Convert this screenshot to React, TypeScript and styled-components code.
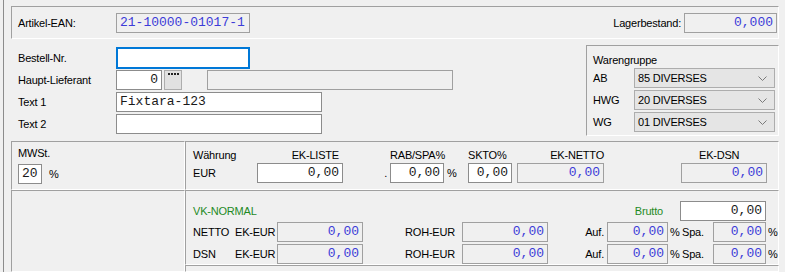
import styled, { createGlobalStyle } from "styled-components";

const BLUE = "#3c3cd8";
const GREEN = "#1f8a1f";

const GlobalStyle = createGlobalStyle`
  body {
    margin: 0;
    background: #f0f0f0;
    font-family: "Liberation Sans", Arial, sans-serif;
    font-size: 11px;
    letter-spacing: -0.2px;
    color: #000;
  }
`;

const Window = styled.div`
  box-sizing: border-box;
  width: 782px;
  height: 272px;
  margin-left: 3px;
  padding: 6px 0 0 7px;
  border-left: 1px solid #8c8c8c;
  overflow: hidden;
`;

// sunken frame as the old win32 group boxes draw it
const Etched = styled.div`
  box-sizing: border-box;
  border-top: 1px solid #a0a0a0;
  border-left: 1px solid #a0a0a0;
  border-bottom: 1px solid #fff;
  border-right: 1px solid #fff;
`;

const HeaderPanel = styled(Etched)`
  width: 768px;
  height: 33px;
  display: flex;
  align-items: center;
  padding: 0 1px 0 6px;
`;

const Label = styled.span<{ $w?: number; $align?: "left" | "right"; $pl?: number; $pr?: number; $color?: string; $auto?: boolean }>`
  box-sizing: border-box;
  flex: none;
  display: inline-block;
  width: ${(p) => (p.$w ? `${p.$w}px` : "auto")};
  margin-left: ${(p) => (p.$auto ? "auto" : "0")};
  padding-left: ${(p) => p.$pl ?? 0}px;
  padding-right: ${(p) => p.$pr ?? 0}px;
  text-align: ${(p) => p.$align ?? "left"};
  color: ${(p) => p.$color ?? "#000"};
  white-space: nowrap;
`;

const Field = styled.div<{ $w: number; $h?: number; $ro?: boolean; $blue?: boolean; $left?: boolean; $focus?: boolean; $ml?: number }>`
  box-sizing: border-box;
  flex: none;
  width: ${(p) => p.$w}px;
  height: ${(p) => p.$h ?? 20}px;
  margin-left: ${(p) => p.$ml ?? 0}px;
  border: ${(p) => (p.$focus ? "2px solid #0078d7" : `1px solid ${p.$ro ? "#a0a0a0" : "#8c8c8c"}`)};
  background: ${(p) => (p.$ro ? "#f0f0f0" : "#fff")};
  color: ${(p) => (p.$blue ? BLUE : "#1a1a1a")};
  font-family: "Liberation Mono", "Courier New", monospace;
  font-size: 13px;
  letter-spacing: 0;
  line-height: 18px;
  padding: 0 3px 0 3px;
  text-align: ${(p) => (p.$left ? "left" : "right")};
  white-space: nowrap;
  overflow: hidden;
`;

const MiddleSection = styled.div`
  box-sizing: border-box;
  width: 768px;
  height: 102px;
  padding-top: 6px;
  display: flex;
  justify-content: space-between;
  align-items: flex-start;
`;

const Form = styled.div`
  margin: 2px 0 0 7px;
  display: flex;
  flex-direction: column;
`;

const FormRow = styled.div`
  height: 22px;
  display: flex;
  align-items: center;
`;

const DotsButton = styled.div`
  box-sizing: border-box;
  flex: none;
  width: 18px;
  height: 20px;
  margin-left: 2px;
  padding-top: 2px;
  background: #e1e1e1;
  border: 1px solid #adadad;
  display: flex;
  justify-content: center;
  align-items: flex-start;
`;

const GroupBox = styled(Etched)`
  width: 193px;
  height: 91px;
  padding: 8px 3px 0 6px;
`;

const GroupTitle = styled.div`
  line-height: 13px;
`;

const ComboRow = styled.div`
  height: 22px;
  display: flex;
  align-items: center;
`;

const Combo = styled.div`
  box-sizing: border-box;
  width: 141px;
  height: 20px;
  border: 1px solid #adadad;
  background: #e5e5e5;
  display: flex;
  align-items: center;
  justify-content: space-between;
  padding: 0 7px 0 3px;
`;

const BottomGrid = styled.div`
  width: 768px;
  height: 131px;
  display: grid;
  grid-template-columns: 174px 594px;
  grid-template-rows: 49px 75px 1fr;
`;

const MwstCell = styled(Etched)`
  padding: 5px 0 0 6px;
`;

const EmptyCell = styled(Etched)`
  grid-row: 2 / 4;
`;

const PurchaseCell = styled(Etched)`
  padding: 7px 0 0 7px;
  display: flex;
`;

const VkCell = styled(Etched)`
  padding: 10px 12px 0 7px;
`;

const InlineRow = styled.div<{ $mb?: number }>`
  height: 20px;
  line-height: 20px;
  margin-bottom: ${(p) => p.$mb ?? 0}px;
  display: flex;
  align-items: center;
`;

const Col = styled.div<{ $w: number; $ml?: number }>`
  flex: none;
  width: ${(p) => p.$w}px;
  margin-left: ${(p) => p.$ml ?? 0}px;
  display: flex;
  flex-direction: column;
`;

const ColHead = styled.div<{ $align?: "left" | "right"; $pl?: number; $pr?: number }>`
  height: 14px;
  line-height: 13px;
  white-space: nowrap;
  text-align: ${(p) => p.$align ?? "left"};
  padding-left: ${(p) => p.$pl ?? 0}px;
  padding-right: ${(p) => p.$pr ?? 0}px;
`;

const ColBody = styled.div<{ $align?: "left" | "right"; $pl?: number; $pr?: number }>`
  height: 20px;
  line-height: 20px;
  white-space: nowrap;
  text-align: ${(p) => p.$align ?? "left"};
  padding-left: ${(p) => p.$pl ?? 0}px;
  padding-right: ${(p) => p.$pr ?? 0}px;
`;

const Chevron = () => (
  <svg width="9" height="5" viewBox="0 0 9 5">
    <polyline points="0.5,0.5 4.5,4.5 8.5,0.5" fill="none" stroke="#7a7a7a" strokeWidth="1" />
  </svg>
);

const Dots = () => (
  <svg width="11" height="2" viewBox="0 0 11 2">
    {[0, 3, 6, 9].map((x) => (
      <rect key={x} x={x} y="0" width="2" height="2" fill="#222" />
    ))}
  </svg>
);

const warengruppen = [
  { key: "AB", value: "85 DIVERSES" },
  { key: "HWG", value: "20 DIVERSES" },
  { key: "WG", value: "01 DIVERSES" },
];

const vkRows = [
  { name: "NETTO", mb: 2 },
  { name: "DSN", mb: 0 },
];

export default function App() {
  return (
    <>
      <GlobalStyle />
      <Window>
        <HeaderPanel>
          <Label $w={98}>Artikel-EAN:</Label>
          <Field $w={134} $ro $blue $left>
            21-10000-01017-1
          </Field>
          <Label $auto>Lagerbestand:</Label>
          <Field $w={93} $ro $blue $ml={3}>
            0,000
          </Field>
        </HeaderPanel>

        <MiddleSection>
          <Form>
            <FormRow>
              <Label $w={98}>Bestell-Nr.</Label>
              <Field $w={134} $h={22} $focus $left />
            </FormRow>
            <FormRow>
              <Label $w={98}>Haupt-Lieferant</Label>
              <Field $w={46}>0</Field>
              <DotsButton>
                <Dots />
              </DotsButton>
              <Field $w={246} $ro $ml={25} />
            </FormRow>
            <FormRow>
              <Label $w={98}>Text 1</Label>
              <Field $w={206} $left>
                Fixtara-123
              </Field>
            </FormRow>
            <FormRow>
              <Label $w={98}>Text 2</Label>
              <Field $w={206} $left />
            </FormRow>
          </Form>

          <GroupBox>
            <GroupTitle>Warengruppe</GroupTitle>
            {warengruppen.map((w) => (
              <ComboRow key={w.key}>
                <Label $w={41}>{w.key}</Label>
                <Combo>
                  <span>{w.value}</span>
                  <Chevron />
                </Combo>
              </ComboRow>
            ))}
          </GroupBox>
        </MiddleSection>

        <BottomGrid>
          <MwstCell>
            <ColHead>MWSt.</ColHead>
            <InlineRow style={{ marginTop: 3 }}>
              <Field $w={24} $left>
                20
              </Field>
              <Label $pl={7}>%</Label>
            </InlineRow>
          </MwstCell>

          <PurchaseCell>
            <Col $w={64}>
              <ColHead>Währung</ColHead>
              <ColBody>EUR</ColBody>
            </Col>
            <Col $w={86}>
              <ColHead $align="right" $pr={4}>
                EK-LISTE
              </ColHead>
              <Field $w={86}>0,00</Field>
            </Col>
            <Col $w={47}>
              <ColHead />
              <ColBody $align="right" $pr={3}>
                .
              </ColBody>
            </Col>
            <Col $w={54}>
              <ColHead>RAB/SPA%</ColHead>
              <Field $w={54}>0,00</Field>
            </Col>
            <Col $w={24}>
              <ColHead />
              <ColBody $pl={3}>%</ColBody>
            </Col>
            <Col $w={44}>
              <ColHead>SKTO%</ColHead>
              <Field $w={44}>0,00</Field>
            </Col>
            <Col $w={87} $ml={5}>
              <ColHead $align="right">EK-NETTO</ColHead>
              <Field $w={87} $ro $blue>
                0,00
              </Field>
            </Col>
            <Col $w={86} $ml={77}>
              <ColHead $pl={18}>EK-DSN</ColHead>
              <Field $w={86} $ro $blue>
                0,00
              </Field>
            </Col>
          </PurchaseCell>

          <EmptyCell />

          <VkCell>
            <InlineRow $mb={1}>
              <Label $color={GREEN}>VK-NORMAL</Label>
              <Label $auto $color={GREEN}>
                Brutto
              </Label>
              <Field $w={86} $ml={17}>
                0,00
              </Field>
            </InlineRow>
            {vkRows.map((r) => (
              <InlineRow key={r.name} $mb={r.mb}>
                <Label $w={42}>{r.name}</Label>
                <Label $w={42} $align="right" $pr={2}>
                  EK-EUR
                </Label>
                <Field $w={86} $ro $blue>
                  0,00
                </Field>
                <Label $w={99} $align="right" $pr={7}>
                  ROH-EUR
                </Label>
                <Field $w={86} $ro $blue>
                  0,00
                </Field>
                <Label $w={59} $align="right" $pr={3}>
                  Auf.
                </Label>
                <Field $w={61} $ro $blue>
                  0,00
                </Field>
                <Label $w={13} $pl={2}>
                  %
                </Label>
                <Label $w={32} $pl={1}>
                  Spa.
                </Label>
                <Field $w={53} $ro $blue>
                  0,00
                </Field>
                <Label $pl={2}>%</Label>
              </InlineRow>
            ))}
          </VkCell>

          <Etched />
        </BottomGrid>
      </Window>
    </>
  );
}
